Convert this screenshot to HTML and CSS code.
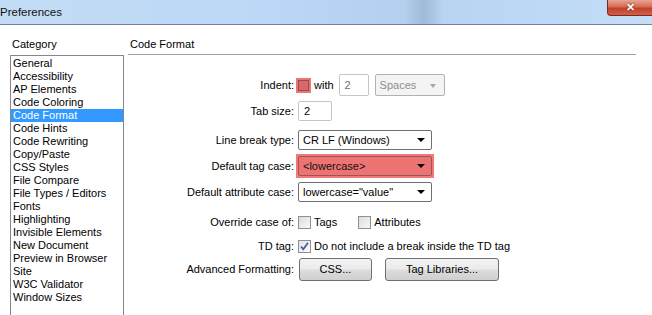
FILE: index.html
```html
<!DOCTYPE html>
<html lang="en">
<head>
  <meta charset="UTF-8">
  <title>Preferences</title>
  <link rel="stylesheet" href="styles.css">
</head>
<body>

<div class="titlebar">
  <span class="title">Preferences</span>
  <div class="close-btn">&#x2715;</div>
</div>

<div class="dialog">
  <!-- Category list -->
  <div class="category">
    <div class="heading">Category</div>
    <ul class="list">
      <li>General</li>
      <li>Accessibility</li>
      <li>AP Elements</li>
      <li>Code Coloring</li>
      <li class="selected">Code Format</li>
      <li>Code Hints</li>
      <li>Code Rewriting</li>
      <li>Copy/Paste</li>
      <li>CSS Styles</li>
      <li>File Compare</li>
      <li>File Types / Editors</li>
      <li>Fonts</li>
      <li>Highlighting</li>
      <li>Invisible Elements</li>
      <li>New Document</li>
      <li>Preview in Browser</li>
      <li>Site</li>
      <li>W3C Validator</li>
      <li>Window Sizes</li>
    </ul>
  </div>

  <!-- Code Format panel -->
  <div class="panel">
    <div class="heading panel-heading">Code Format</div>

    <div class="form">
      <div class="row">
        <label class="label">Indent:</label>
        <div class="controls">
          <span class="mark-box"><span class="checkbox"></span></span>
          <span class="text">with</span>
          <span class="textbox indent-size">2</span>
          <span class="select disabled spaces">Spaces<span class="arrow"></span></span>
        </div>
      </div>

      <div class="row">
        <label class="label">Tab size:</label>
        <div class="controls">
          <span class="textbox tab-size">2</span>
        </div>
      </div>

      <div class="row row-loose">
        <label class="label">Line break type:</label>
        <div class="controls">
          <span class="select wide">CR LF (Windows)<span class="arrow"></span></span>
        </div>
      </div>

      <div class="row">
        <label class="label">Default tag case:</label>
        <div class="controls">
          <span class="mark-select"><span class="select wide marked">&lt;lowercase&gt;<span class="arrow"></span></span></span>
        </div>
      </div>

      <div class="row">
        <label class="label">Default attribute case:</label>
        <div class="controls">
          <span class="select wide">lowercase="value"<span class="arrow"></span></span>
        </div>
      </div>

      <div class="row row-spaced">
        <label class="label">Override case of:</label>
        <div class="controls">
          <span class="checkbox"></span>
          <span class="text tags-text">Tags</span>
          <span class="checkbox"></span>
          <span class="text">Attributes</span>
        </div>
      </div>

      <div class="row row-short">
        <label class="label">TD tag:</label>
        <div class="controls">
          <span class="checkbox checked">
            <svg width="11" height="11" viewBox="0 0 11 11"><path d="M2 5.5 L4.3 8.3 L9 1.8" fill="none" stroke="#4a5d9c" stroke-width="1.8"/></svg>
          </span>
          <span class="text">Do not include a break inside the TD tag</span>
        </div>
      </div>

      <div class="row row-buttons">
        <label class="label">Advanced Formatting:</label>
        <div class="controls">
          <button class="btn css-btn">CSS...</button>
          <button class="btn libs-btn">Tag Libraries...</button>
        </div>
      </div>
    </div>
  </div>
</div>

</body>
</html>
```

FILE: styles.css
```css
body {
  margin: 0;
  padding: 0;
  width: 652px;
  height: 315px;
  overflow: hidden;
  background-color: #fff;
  font-family: "Liberation Sans", Arial, sans-serif;
  font-size: 11px;
  color: #000;
}

/* Window title bar */
.titlebar {
  height: 24px;
  display: flex;
  align-items: center;
  justify-content: space-between;
  border-bottom: 1px solid #6f8196;
  background: linear-gradient(90deg, #c3dcf5 0%, #bcd8f6 40%, #b4d0ee 62%, #9fbad6 65%, #b8d4f2 68%, #c4def8 100%);
}
.title {
  font-size: 11.5px;
  color: #111;
  margin-top: -1px;
}
.close-btn {
  align-self: flex-start;
  width: 44px;
  height: 15px;
  border: 1px solid #7a2a20;
  border-top: none;
  border-right: none;
  border-radius: 0 0 0 4px;
  background: linear-gradient(#e8a595 0%, #d66a52 45%, #c1412a 55%, #d0604a 100%);
  color: #fff;
  font-size: 11px;
  font-weight: bold;
  text-align: center;
  line-height: 15px;
  text-shadow: 0 0 2px #5a1a10;
}

.dialog {
  display: flex;
  height: 290px;
  padding: 12px 0 0 10px;
  box-sizing: border-box;
}

.heading {
  height: 15px;
  line-height: 15px;
  padding-left: 2px;
  padding-bottom: 3px;
}

/* Category list */
.category {
  width: 114px;
  flex-shrink: 0;
}
.list {
  list-style: none;
  margin: 0;
  padding: 1px 0 0 0;
  border: 1px solid #828790;
  border-bottom: none;
  height: 260px;
  box-sizing: border-box;
  overflow: hidden;
}
.list li {
  height: 13px;
  line-height: 13px;
  padding-left: 2px;
  white-space: nowrap;
}
.list .selected {
  background-color: #3399ff;
  color: #fff;
}

/* Right panel */
.panel {
  flex: 1;
  margin-left: 4px;
  margin-right: 16px;
}
.panel-heading {
  padding-bottom: 2px;
  border-bottom: 1px solid #a0a0a0;
}

.form {
  padding-top: 17px;
}
.row {
  display: flex;
  align-items: center;
  height: 26px;
}
.row-loose {
  margin-top: 3px;
}
.row-spaced {
  margin-top: 4px;
}
.row-short {
  height: 22px;
}
.row-buttons {
  height: 24px;
}
.label {
  width: 166px;
  text-align: right;
  flex-shrink: 0;
}
.controls {
  display: flex;
  align-items: center;
  margin-left: 4px;
}
.text {
  margin-left: 3px;
  white-space: nowrap;
}
.tags-text {
  margin-right: 21px;
}

/* Checkboxes */
.checkbox {
  box-sizing: border-box;
  width: 13px;
  height: 13px;
  border: 1px solid #8e8f8f;
  background: linear-gradient(135deg, #dcdcdc, #f8f8f8);
  display: inline-flex;
  align-items: center;
  justify-content: center;
}
.checkbox.checked {
  background: linear-gradient(135deg, #e0e4ea, #fafafa);
}
.mark-box {
  display: inline-flex;
  align-items: center;
  justify-content: center;
  width: 15px;
  height: 15px;
  margin-left: -2px;
  background-color: #ec7378;
}
.mark-box .checkbox {
  width: 11px;
  height: 11px;
  border-color: #9b4a4e;
  background: #d9696d;
}

/* Text fields */
.textbox {
  box-sizing: border-box;
  display: inline-block;
  border: 1px solid #c5c5c5;
  border-radius: 2px;
  background: #fff;
  padding-left: 5px;
}
.indent-size {
  width: 30px;
  height: 22px;
  line-height: 20px;
  margin-left: 5px;
  color: #6d6d6d;
}
.tab-size {
  width: 34px;
  height: 20px;
  line-height: 18px;
}

/* Drop-downs */
.select {
  box-sizing: border-box;
  position: relative;
  display: inline-block;
  height: 20px;
  line-height: 18px;
  padding-left: 4px;
  border: 1px solid #707070;
  border-radius: 2px;
  background: #fff;
  white-space: nowrap;
}
.select .arrow {
  position: absolute;
  right: 6px;
  top: 7px;
  width: 0;
  height: 0;
  border-left: 4px solid transparent;
  border-right: 4px solid transparent;
  border-top: 4px solid #000;
}
.wide {
  width: 134px;
}
.spaces {
  width: 70px;
  height: 22px;
  line-height: 20px;
  margin-left: 6px;
}
.select.disabled {
  color: #8d8d8d;
  border-color: #adb2b5;
  background: #f4f4f4;
}
.select.disabled .arrow {
  top: 9px;
  right: 8px;
  border-top-color: #a7a7a7;
  border-left-width: 3px;
  border-right-width: 3px;
}
.mark-select {
  display: inline-block;
  padding: 2px;
  margin: -2px;
  background-color: #f07a7a;
}
.select.marked {
  background-color: #ee7474;
  border-color: #9a5555;
  color: #111;
}

/* Buttons */
.btn {
  box-sizing: border-box;
  height: 23px;
  margin-left: 1px;
  border: 1px solid #707070;
  border-radius: 3px;
  background: linear-gradient(#f2f2f2 0%, #ebebeb 48%, #dddddd 52%, #cfcfcf 100%);
  font-family: "Liberation Sans", Arial, sans-serif;
  font-size: 11px;
  color: #000;
  padding: 0;
}
.css-btn {
  width: 73px;
}
.libs-btn {
  width: 114px;
  margin-left: 13px;
}
```
